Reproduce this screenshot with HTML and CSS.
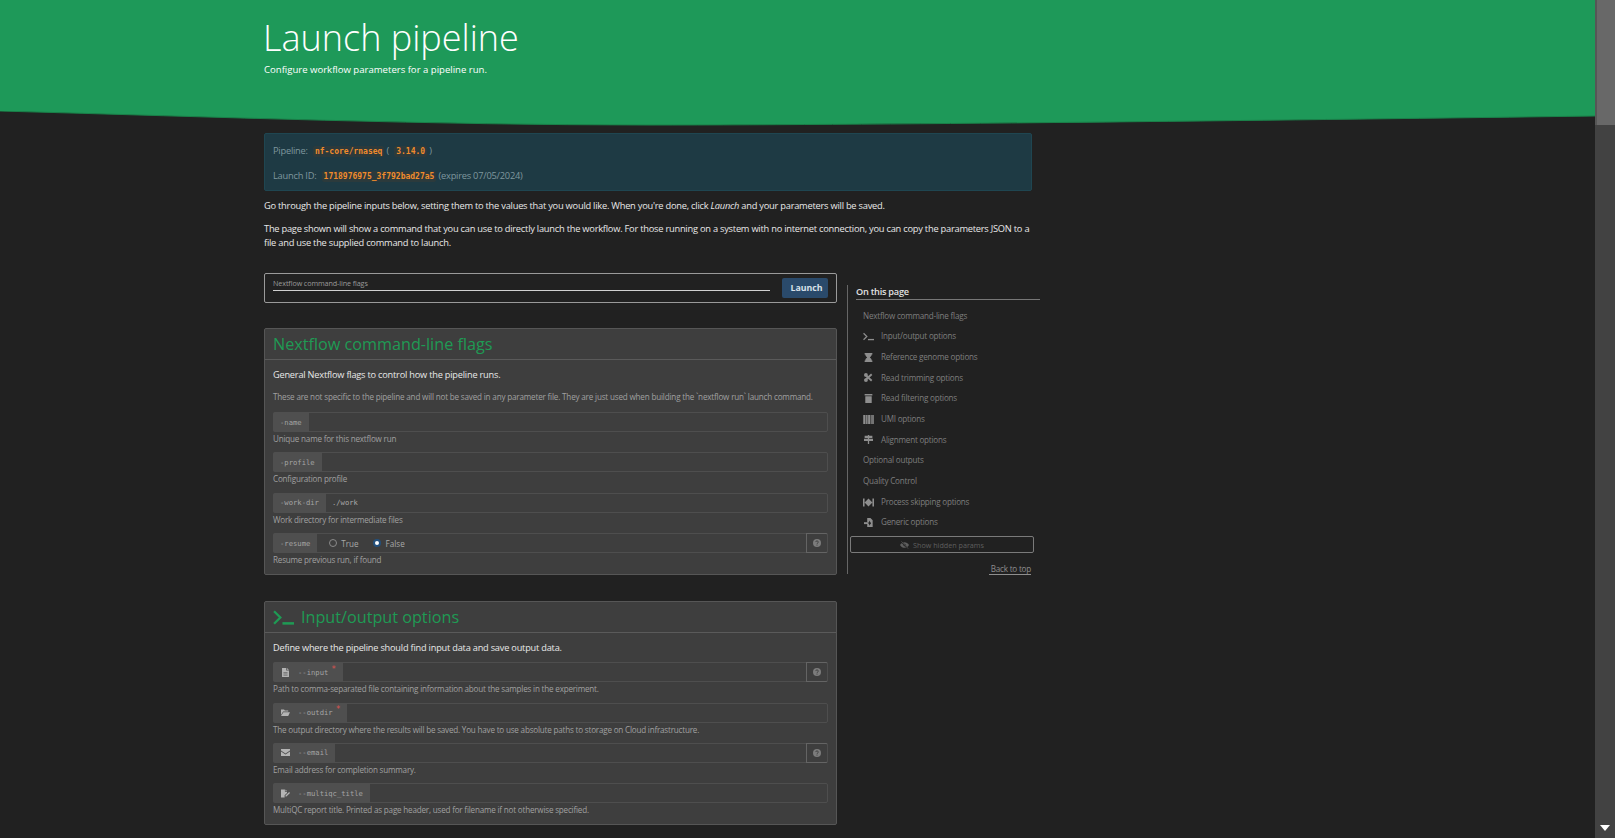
FILE: index.html
```html
<!DOCTYPE html>
<html lang="en">
<head>
    <meta charset="UTF-8">
    <meta name="viewport" content="width=device-width, initial-scale=1.0">
    <title>Launch pipeline</title>
    <link rel="stylesheet" href="styles.css">
</head>
<body>

<!-- icon sprite -->
<svg class="sprite">
    <symbol id="i-terminal" viewBox="0 0 20 14"><path d="M1 1l6 6-6 6" fill="none" stroke="currentColor" stroke-width="2.2"/><rect x="9" y="11.4" width="11" height="2.4" fill="currentColor"/></symbol>
    <symbol id="i-hourglass" viewBox="0 0 12 14"><path d="M0 0h12v2.500h-1c0 2.500-2 3.500-3 4.500 1 1 3 2 3 4.500h1V14H0v-2.500h1C1 9 3 8 4 7 3 6 1 5 1 2.500H0z" fill="currentColor"/></symbol>
    <symbol id="i-cut" viewBox="0 0 14 14"><path d="M2 3l10 9M2 11l10-9" stroke="currentColor" stroke-width="3"/><circle cx="3" cy="3" r="3" fill="currentColor"/><circle cx="3" cy="11" r="3" fill="currentColor"/></symbol>
    <symbol id="i-trash" viewBox="0 0 12 14"><path d="M0 0h12v2.400H0zM1 3.400h10V14H1z" fill="currentColor"/></symbol>
    <symbol id="i-barcode" viewBox="0 0 14 12"><path d="M0 0h3v12H0zM3.800 0h2v12h-2zM6.500 0h2.500v12H6.500zM9.800 0h1.500v12H9.800zM12 0h2v12h-2z" fill="currentColor"/></symbol>
    <symbol id="i-signs" viewBox="0 0 14 14"><path d="M1 1h12v3.500H1zM0 6h14v3.500H0zM6 0h2v1H6zM6 4.500h2V6H6zM6 9.500h2V14H6z" fill="currentColor"/></symbol>
    <symbol id="i-forward" viewBox="0 0 14 10"><path d="M0 0h2v10H0zM12 0h2v10h-2zM2 5l5-5v10zM12 5L7 0v10z" fill="currentColor"/></symbol>
    <symbol id="i-import" viewBox="0 0 14 14"><path d="M5 0h5l3.500 3.500V14H5V9.500h3V12l3-4-3-4v2.500H5z" fill="currentColor"/><path d="M0 6.500h7v3H0z" fill="currentColor"/></symbol>
    <symbol id="i-eye-slash" viewBox="0 0 16 13"><path d="M0 6.500C2 3 5 1.500 8 1.500s6 1.500 8 5c-2 3.500-5 5-8 5s-6-1.500-8-5z" fill="currentColor"/><circle cx="8" cy="6.500" r="2" fill="#212121"/><path d="M2 0l12 13" stroke="#212121" stroke-width="2.600"/><path d="M2.500 0l12 13" stroke="currentColor" stroke-width="1.200"/></symbol>
    <symbol id="i-question" viewBox="0 0 12 12"><circle cx="6" cy="6" r="6" fill="currentColor"/><path d="M4 4.600c0-2.400 4-2.400 4 0 0 1.500-2 1.300-2 2.800" fill="none" stroke="#3e3e3e" stroke-width="1.300"/><rect x="5.300" y="8.400" width="1.400" height="1.500" fill="#3e3e3e"/></symbol>
    <symbol id="i-file" viewBox="0 0 10 13"><path d="M0 0h6v3.500h4V13H0z" fill="currentColor"/><path d="M7 0l3 2.600H7z" fill="currentColor"/><path d="M2 6.500h6M2 8.500h6M2 10.500h6" stroke="#4f4f4f" stroke-width=".8"/></symbol>
    <symbol id="i-folder" viewBox="0 0 15 12"><path d="M0 1h5l1.500 1.500H12V4.500H3.500L0 10z" fill="currentColor"/><path d="M4 5.500h11L12 12H0z" fill="currentColor"/></symbol>
    <symbol id="i-envelope" viewBox="0 0 14 11"><path d="M0 0h14v2.500L7 7 0 2.500zM0 4l7 4.500L14 4v7H0z" fill="currentColor"/></symbol>
    <symbol id="i-signature" viewBox="0 0 15 13"><path d="M0 0h6.500v3.500H10v2L6 9.500V13H0z" fill="currentColor"/><path d="M7.500 0L10 2.500H7.500zM7.500 10l6-6 1.500 1.500-6 6H7.500z" fill="currentColor"/></symbol>
</svg>

<div class="window">
    <div class="page">
        <header class="hero">
            <div class="hero-text">
                <h1>Launch pipeline</h1>
                <p>Configure workflow parameters for a pipeline run.</p>
            </div>
        </header>
        <svg class="hero-curve" viewBox="0 0 1595 15" preserveAspectRatio="none">
            <path d="M0 0C220 6 430 14 649 14 900 14 1300 9 1595 5V0z" fill="#1e9959"/>
            <path d="M0 0C220 6 430 14 649 14 900 14 1300 9 1595 5" fill="none" stroke="#1a8049" stroke-width="1"/>
        </svg>

        <div class="content">
            <div class="info-box">
                <p>Pipeline: <code>nf-core/rnaseq</code> ( <code>3.14.0</code> )</p>
                <p>Launch ID: <code>1718976975_3f792bad27a5</code> (expires 07/05/2024)</p>
            </div>

            <p class="intro">Go through the pipeline inputs below, setting them to the values that you would like. When you're done, click <em>Launch</em> and your parameters will be saved.</p>
            <p class="intro">The page shown will show a command that you can use to directly launch the workflow. For those running on a system with no internet connection, you can copy the parameters JSON to a file and use the supplied command to launch.</p>

            <div class="columns">
                <div class="main-col">
                    <div class="launch-bar">
                        <div class="launch-field">Nextflow command-line flags</div>
                        <button class="launch-button" type="button">Launch</button>
                    </div>

                    <section class="card">
                        <h2 class="card-title">Nextflow command-line flags</h2>
                        <div class="card-body">
                            <p class="card-lead">General Nextflow flags to control how the pipeline runs.</p>
                            <p class="card-note">These are not specific to the pipeline and will not be saved in any parameter file. They are just used when building the `nextflow run` launch command.</p>

                            <div class="param">
                                <div class="param-input"><span class="param-label">-name</span><span class="param-value"></span></div>
                                <div class="param-help">Unique name for this nextflow run</div>
                            </div>
                            <div class="param">
                                <div class="param-input"><span class="param-label">-profile</span><span class="param-value"></span></div>
                                <div class="param-help">Configuration profile</div>
                            </div>
                            <div class="param">
                                <div class="param-input"><span class="param-label">-work-dir</span><span class="param-value">./work</span></div>
                                <div class="param-help">Work directory for intermediate files</div>
                            </div>
                            <div class="param">
                                <div class="param-input">
                                    <span class="param-label">-resume</span>
                                    <span class="param-value radios">
                                        <span class="radio"></span><span class="radio-text">True</span>
                                        <span class="radio checked"></span><span class="radio-text">False</span>
                                    </span>
                                    <span class="param-q"><svg><use href="#i-question"/></svg></span>
                                </div>
                                <div class="param-help">Resume previous run, if found</div>
                            </div>
                        </div>
                    </section>

                    <section class="card">
                        <h2 class="card-title"><svg class="title-icon"><use href="#i-terminal"/></svg>Input/output options</h2>
                        <div class="card-body">
                            <p class="card-lead">Define where the pipeline should find input data and save output data.</p>

                            <div class="param">
                                <div class="param-input">
                                    <span class="param-label"><svg class="label-icon"><use href="#i-file"/></svg>--input<sup class="req">*</sup></span>
                                    <span class="param-value"></span>
                                    <span class="param-q"><svg><use href="#i-question"/></svg></span>
                                </div>
                                <div class="param-help">Path to comma-separated file containing information about the samples in the experiment.</div>
                            </div>
                            <div class="param">
                                <div class="param-input">
                                    <span class="param-label"><svg class="label-icon"><use href="#i-folder"/></svg>--outdir<sup class="req">*</sup></span>
                                    <span class="param-value"></span>
                                </div>
                                <div class="param-help">The output directory where the results will be saved. You have to use absolute paths to storage on Cloud infrastructure.</div>
                            </div>
                            <div class="param">
                                <div class="param-input">
                                    <span class="param-label"><svg class="label-icon"><use href="#i-envelope"/></svg>--email</span>
                                    <span class="param-value"></span>
                                    <span class="param-q"><svg><use href="#i-question"/></svg></span>
                                </div>
                                <div class="param-help">Email address for completion summary.</div>
                            </div>
                            <div class="param">
                                <div class="param-input">
                                    <span class="param-label"><svg class="label-icon"><use href="#i-signature"/></svg>--multiqc_title</span>
                                    <span class="param-value"></span>
                                </div>
                                <div class="param-help">MultiQC report title. Printed as page header, used for filename if not otherwise specified.</div>
                            </div>
                        </div>
                    </section>
                </div>

                <aside class="side-nav">
                    <div class="side-title">On this page</div>
                    <ul>
                        <li><a>Nextflow command-line flags</a></li>
                        <li class="has-icon"><svg><use href="#i-terminal"/></svg><a>Input/output options</a></li>
                        <li class="has-icon"><svg><use href="#i-hourglass"/></svg><a>Reference genome options</a></li>
                        <li class="has-icon"><svg><use href="#i-cut"/></svg><a>Read trimming options</a></li>
                        <li class="has-icon"><svg><use href="#i-trash"/></svg><a>Read filtering options</a></li>
                        <li class="has-icon"><svg><use href="#i-barcode"/></svg><a>UMI options</a></li>
                        <li class="has-icon"><svg><use href="#i-signs"/></svg><a>Alignment options</a></li>
                        <li><a>Optional outputs</a></li>
                        <li><a>Quality Control</a></li>
                        <li class="has-icon"><svg><use href="#i-forward"/></svg><a>Process skipping options</a></li>
                        <li class="has-icon"><svg><use href="#i-import"/></svg><a>Generic options</a></li>
                    </ul>
                    <button class="hidden-toggle" type="button"><svg><use href="#i-eye-slash"/></svg>Show hidden params</button>
                    <div class="back-top"><a>Back to top</a></div>
                </aside>
            </div>
        </div>
    </div>

    <div class="scrollbar">
        <div class="scroll-thumb"></div>
        <div class="scroll-track"><span class="scroll-arrow"></span></div>
    </div>
</div>

</body>
</html>
```

FILE: styles.css
```css
html, body {
    margin: 0;
    padding: 0;
    height: 100%;
    overflow: hidden;
}

body {
    background-color: #212121;
    color: #e4e4e4;
    font-family: "Open Sans", "Liberation Sans", sans-serif;
    font-size: 9.3px;
    letter-spacing: -0.24px;
    line-height: 14.5px;
}

.sprite {
    display: none;
}

.window {
    display: flex;
    height: 838px;
}

.page {
    flex: 1;
    min-width: 0;
    overflow: hidden;
}

/* Header */
.hero {
    background-color: #1e9959;
    height: 111px;
    padding-left: 264px;
    color: #fff;
    overflow: hidden;
}

.hero h1 {
    margin: 0 0 0 -1px;
    padding-top: 13px;
    font-size: 36px;
    font-weight: 300;
    letter-spacing: 0;
    line-height: 50px;
}

.hero p {
    margin: 0;
    font-size: 9.6px;
    letter-spacing: -0.02px;
    line-height: 14px;
}

.hero-curve {
    display: block;
    width: 100%;
    height: 15px;
}

/* Main content */
.content {
    width: 768px;
    margin: 7px 0 0 264px;
}

.info-box {
    height: 58px;
    box-sizing: border-box;
    padding: 9px 8px;
    background-color: #1e3a44;
    border: 1px solid #1f4651;
    border-radius: 2px;
    color: #7e979e;
}

.info-box p {
    margin: 0 0 9px;
    line-height: 15px;
}

code {
    margin-left: 3px;
    padding: 1px 2px;
    background-color: #2c3a3c;
    border-radius: 2px;
    color: #f08c2c;
    font-family: "DejaVu Sans Mono", monospace;
    font-size: 8px;
    font-weight: bold;
    letter-spacing: 0;
}

.intro {
    margin: 0 0 8px;
    color: #e8e8e8;
}

.info-box + .intro {
    margin-top: 8px;
}

.columns {
    display: flex;
    margin-top: 22px;
}

.main-col {
    width: 573px;
    flex: none;
}

/* Launch bar */
.launch-bar {
    display: flex;
    align-items: center;
    height: 30px;
    box-sizing: border-box;
    padding: 0 8px;
    border: 1px solid #9a9a9a;
    border-radius: 2px;
}

.launch-field {
    flex: 1;
    height: 15px;
    margin-top: -8px;
    margin-right: 12px;
    box-sizing: border-box;
    border-bottom: 1px solid #d0d0d0;
    color: #9a9a9a;
    font-size: 7.2px;
    letter-spacing: -0.1px;
    line-height: 14px;
}

.launch-button {
    width: 46px;
    height: 20px;
    padding: 0 0 0 3px;
    background-color: #2a4a6b;
    border: none;
    border-radius: 2px;
    color: #d8e0e8;
    font-family: inherit;
    font-size: 8.8px;
    font-weight: 700;
    letter-spacing: 0;
}

/* Cards */
.card {
    margin-top: 25px;
    background-color: #3e3e3e;
    border: 1px solid #565656;
    border-radius: 2px;
}

.card + .card {
    margin-top: 26px;
}

.card-title {
    display: flex;
    align-items: center;
    height: 30px;
    margin: 0;
    padding-left: 8px;
    border-bottom: 1px solid #5a5a5a;
    color: #1f9a54;
    font-size: 16.2px;
    font-weight: 400;
    letter-spacing: 0;
    line-height: 30px;
}

.title-icon {
    width: 21px;
    height: 15px;
    margin-right: 7px;
}

.card-body {
    padding: 8px;
}

.card-lead {
    margin: 0 0 6.5px;
    color: #e8e8e8;
    font-size: 9.2px;
    letter-spacing: -0.2px;
}

.card-note {
    margin: 8px 0 7.5px;
    color: #a0a0a0;
    font-size: 8.1px;
    letter-spacing: -0.18px;
}

/* Parameter rows */
.param {
    margin-bottom: 7.4px;
}

.param:last-child {
    margin-bottom: 0;
}

.param-input {
    display: flex;
    height: 20px;
    box-sizing: border-box;
    border: 1px solid #4e4e4e;
    border-radius: 2px;
    font-family: "DejaVu Sans Mono", monospace;
    font-size: 7.2px;
    letter-spacing: 0;
    line-height: 17px;
}

.param-label {
    display: flex;
    align-items: center;
    margin: -1px 0 -1px -1px;
    padding: 0 7px;
    background-color: #4f4f4f;
    border-radius: 2px 0 0 2px;
    color: #a4a4a4;
    white-space: nowrap;
}

.label-icon {
    width: 9px;
    height: 9px;
    margin: 0 8px 0 1px;
    color: #b4b4b4;
}

.req {
    margin: -5px 0 0 3px;
    color: #d9534f;
    font-size: 8px;
    line-height: 8px;
}

.param-value {
    flex: 1;
    padding-left: 6px;
    color: #a8a8a8;
}

.param-q {
    display: flex;
    align-items: center;
    justify-content: center;
    width: 22px;
    margin: -1px -1px -1px 0;
    border: 1px solid #646464;
    border-right-color: #4e4e4e;
    border-radius: 0 2px 2px 0;
    box-sizing: border-box;
    color: #7c7c7c;
}

.param-q svg {
    width: 8px;
    height: 8px;
}

.param-help {
    padding-top: 1px;
    color: #a0a0a0;
    font-size: 8.1px;
    letter-spacing: -0.2px;
    line-height: 12px;
}

/* Radios */
.radios {
    display: flex;
    align-items: center;
    padding-left: 12px;
    font-family: "Open Sans", "Liberation Sans", sans-serif;
    font-size: 8.1px;
}

.radio {
    width: 6px;
    height: 6px;
    border: 1px solid #8a8a8a;
    border-radius: 50%;
    margin-right: 4px;
}

.radio-text {
    margin-right: 14px;
}

.radio.checked {
    width: 8px;
    height: 8px;
    background-color: #fff;
    border: 2px solid #24507c;
    box-sizing: border-box;
    margin-right: 5px;
}

/* Side navigation */
.side-nav {
    width: 192px;
    height: 289px;
    flex: none;
    margin: 12px 0 0 10px;
    padding-left: 0;
    border-left: 1px solid #666;
    box-sizing: border-box;
    font-size: 8.1px;
    letter-spacing: -0.21px;
}

.side-title {
    margin-left: 8px;
    margin-right: -1px;
    height: 14px;
    border-bottom: 1px solid #777;
    color: #e0e0e0;
    font-size: 9.2px;
    font-weight: 600;
    letter-spacing: -0.25px;
    line-height: 13px;
}

.side-nav ul {
    margin: 6px 0 0;
    padding: 0 0 0 15px;
    list-style: none;
}

.side-nav li {
    display: flex;
    align-items: center;
    height: 20.7px;
    color: #7e7e7e;
}

.side-nav li svg {
    width: 11px;
    height: 9px;
    margin-right: 7px;
    color: #8e8e8e;
}

.hidden-toggle {
    display: flex;
    align-items: center;
    justify-content: center;
    width: 184px;
    height: 17px;
    margin: 3px 0 0 2px;
    padding: 0;
    background: none;
    border: 1px solid #7a7a7a;
    border-radius: 2px;
    color: #5f5f5f;
    font-family: inherit;
    font-size: 7.2px;
}

.hidden-toggle svg {
    width: 9px;
    height: 8px;
    margin-right: 4px;
}

.back-top {
    margin-top: 9px;
    padding-right: 8px;
    text-align: right;
    color: #8e8e8e;
}

.back-top a {
    padding-left: 2px;
    border-bottom: 1px solid #8e8e8e;
}

/* Painted scrollbar */
.scrollbar {
    display: flex;
    flex-direction: column;
    width: 20px;
    flex: none;
    background-color: #424242;
}

.scroll-thumb {
    height: 125px;
    margin-left: 2px;
    background-color: #686868;
    box-shadow: -2px 0 0 #565656;
}

.scroll-track {
    display: flex;
    flex: 1;
    align-items: flex-end;
    justify-content: center;
    padding-bottom: 7px;
}

.scroll-arrow {
    width: 0;
    height: 0;
    border-left: 5px solid transparent;
    border-right: 5px solid transparent;
    border-top: 6px solid #fff;
}
```
